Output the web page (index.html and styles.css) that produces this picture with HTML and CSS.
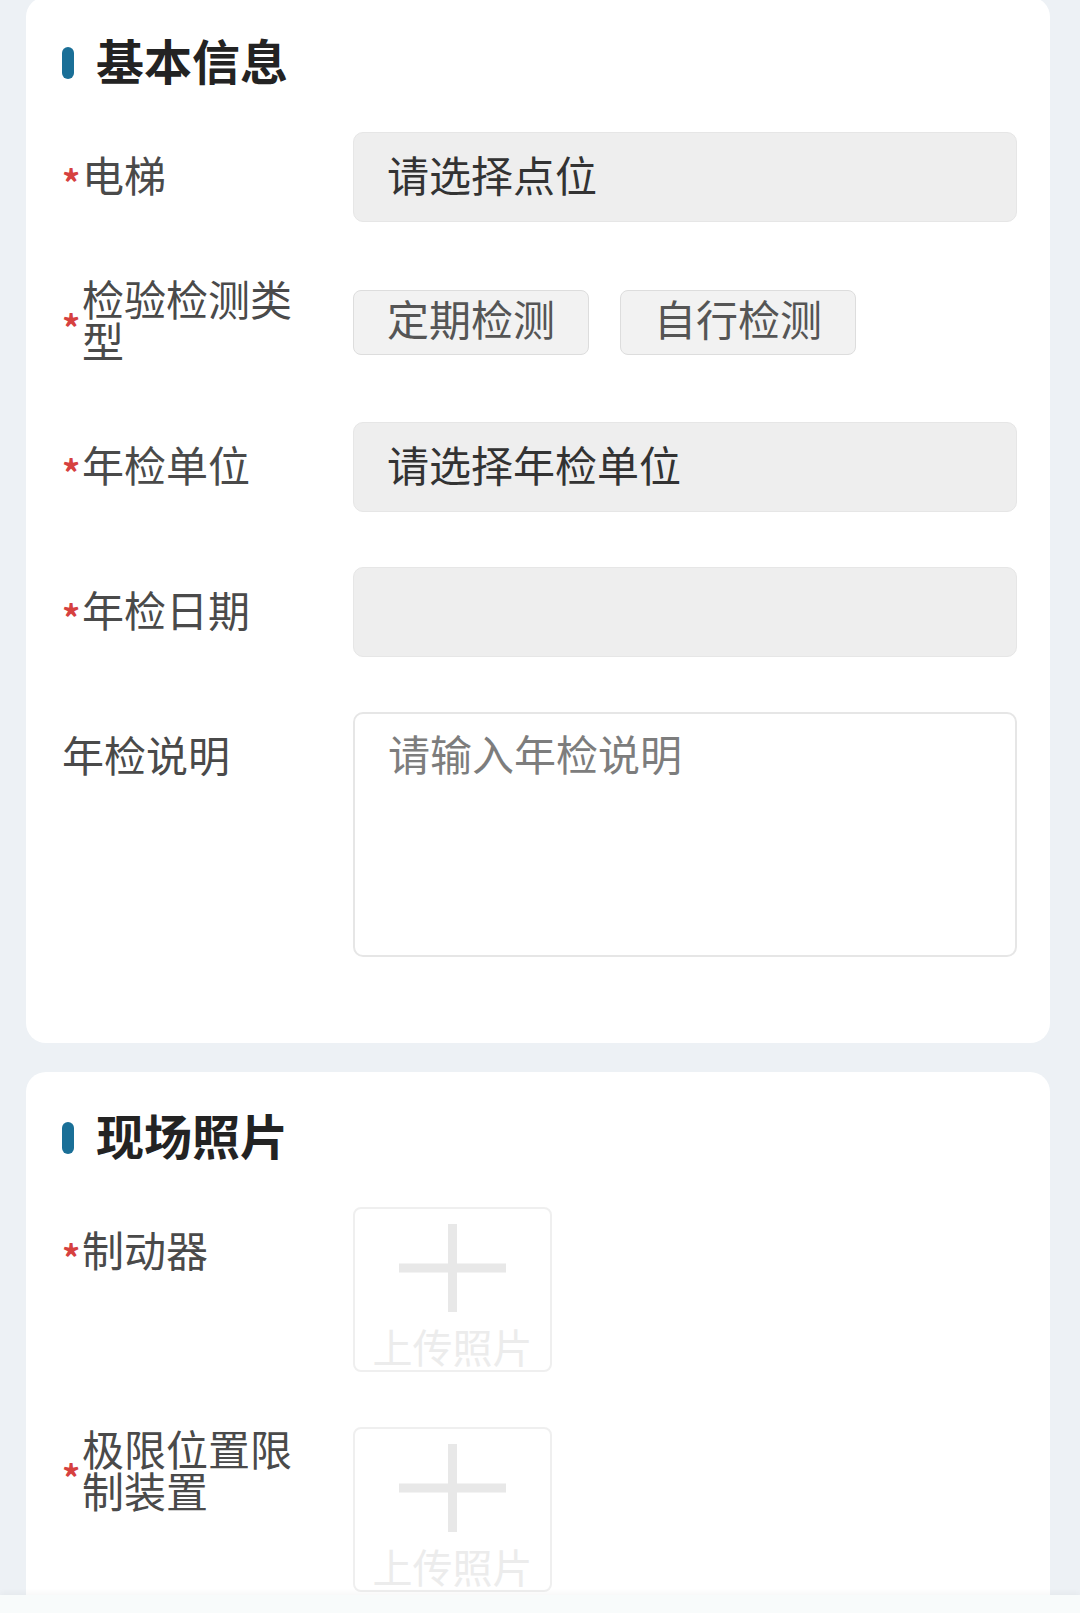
FILE: index.html
```html
<!DOCTYPE html>
<html lang="zh-CN">
<head>
<meta charset="utf-8">
<title>年检登记</title>
<link rel="stylesheet" href="styles.css">
</head>
<body>
<main class="page">
  <section class="card card-basic">
    <h2 class="section-title"><span class="title-bar"></span>基本信息</h2>
    <div class="rows">
      <div class="row">
        <div class="label"><span class="req">*</span><span class="label-text">电梯</span></div>
        <div class="select">请选择点位</div>
      </div>
      <div class="row">
        <div class="label"><span class="req">*</span><span class="label-text">检验检测类型</span></div>
        <div class="options">
          <button class="opt" type="button">定期检测</button>
          <button class="opt" type="button">自行检测</button>
        </div>
      </div>
      <div class="row">
        <div class="label"><span class="req">*</span><span class="label-text">年检单位</span></div>
        <div class="select">请选择年检单位</div>
      </div>
      <div class="row">
        <div class="label"><span class="req">*</span><span class="label-text">年检日期</span></div>
        <div class="select"></div>
      </div>
      <div class="row">
        <div class="label"><span class="label-text">年检说明</span></div>
        <div class="textarea">请输入年检说明</div>
      </div>
    </div>
  </section>

  <section class="card card-photos">
    <h2 class="section-title"><span class="title-bar"></span>现场照片</h2>
    <div class="rows">
      <div class="row">
        <div class="label"><span class="req">*</span><span class="label-text">制动器</span></div>
        <div class="upload">
          <svg class="plus" width="107" height="88" viewBox="0 0 107 88"><line x1="0" y1="44" x2="107" y2="44"/><line x1="53.5" y1="0" x2="53.5" y2="88"/></svg>
          <span class="upload-text">上传照片</span>
        </div>
      </div>
      <div class="row">
        <div class="label"><span class="req">*</span><span class="label-text">极限位置限制装置</span></div>
        <div class="upload">
          <svg class="plus" width="107" height="88" viewBox="0 0 107 88"><line x1="0" y1="44" x2="107" y2="44"/><line x1="53.5" y1="0" x2="53.5" y2="88"/></svg>
          <span class="upload-text">上传照片</span>
        </div>
      </div>
    </div>
  </section>
</main>
<div class="footer"></div>
</body>
</html>
```

FILE: styles.css
```css
* { box-sizing: border-box; }

html, body {
  margin: 0;
  padding: 0;
  background: #edf1f5;
  font-family: "Noto Sans CJK SC", "Noto Sans", sans-serif;
}

.page {
  padding: 0 30px 40px 26px;
  display: flex;
  flex-direction: column;
  gap: 29px;
}

.card {
  background: #ffffff;
  border-radius: 20px;
  padding: 36px 33px 86px 36px;
}

.card-basic { margin-top: -3px; }
.card-photos { padding-bottom: 60px; }

.section-title {
  margin: 0 0 39px 0;
  display: flex;
  align-items: center;
  height: 60px;
  padding-bottom: 8px;
  font-size: 48px;
  line-height: 52px;
  font-weight: 700;
  color: #232323;
}

.title-bar {
  width: 12px;
  height: 32px;
  border-radius: 6px;
  background: #1a6f97;
  margin-top: 8px;
  margin-right: 22px;
}

.rows {
  display: flex;
  flex-direction: column;
  gap: 55px;
}

.row {
  display: flex;
  align-items: flex-start;
}

.label {
  flex: 0 0 291px;
  height: 90px;
  padding-bottom: 6px;
  display: flex;
  align-items: center;
  color: #4a4a4a;
  font-size: 42px;
  line-height: 42px;
}

.req {
  flex: 0 0 20px;
  width: 20px;
  height: 46px;
  padding-top: 10px;
  margin-top: 4px;
  color: #d6413f;
  font-size: 36px;
  line-height: 36px;
  font-weight: 700;
}

.label-text {
  width: 215px;
}

.select {
  flex: 1;
  height: 90px;
  background: #eeeeee;
  border: 1px solid #e6e6e6;
  border-radius: 10px;
  padding: 0 33px 8px;
  display: flex;
  align-items: center;
  font-size: 42px;
  color: #333333;
}

.options {
  flex: 1;
  height: 90px;
  display: flex;
  align-items: center;
  gap: 31px;
}

.opt {
  height: 65px;
  padding: 0 33px 8px;
  background: #f2f2f2;
  border: 1px solid #dddddd;
  border-radius: 8px;
  font-family: inherit;
  font-size: 42px;
  line-height: 1;
  color: #555555;
}

.textarea {
  flex: 1;
  height: 245px;
  background: #ffffff;
  border: 2px solid #e6e6e6;
  border-radius: 10px;
  padding: 14px 33px;
  font-size: 42px;
  line-height: 50px;
  color: #7d7d7d;
}

.upload {
  width: 199px;
  height: 165px;
  border: 2px solid #efefef;
  border-radius: 8px;
  display: flex;
  flex-direction: column;
  align-items: center;
  padding-top: 15px;
}

.plus line {
  stroke: #e8e8e8;
  stroke-width: 9;
  stroke-linecap: round;
}

.upload-text {
  margin-top: 14px;
  font-size: 40px;
  line-height: 40px;
  color: #ececec;
}

.footer {
  position: fixed;
  left: 0;
  right: 0;
  bottom: 0;
  height: 18px;
  background: #f8fbfb;
  box-shadow: 0 -2px 6px rgba(0, 0, 0, 0.04);
}
```
